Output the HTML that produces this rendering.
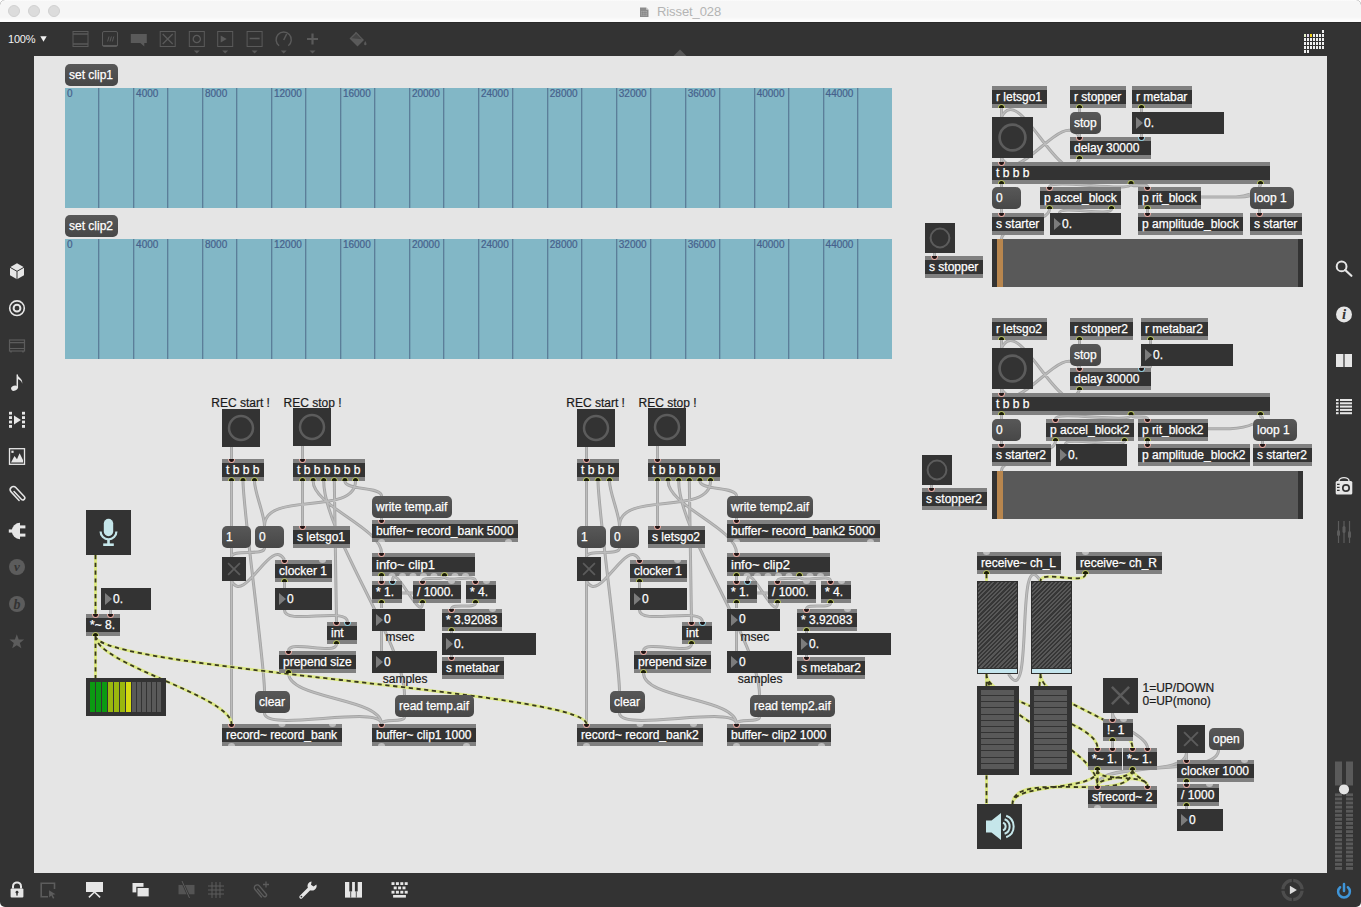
<!DOCTYPE html><html><head><meta charset="utf-8"><title>Risset_028</title><style>

*{box-sizing:border-box}
html,body{margin:0;padding:0}
body{width:1361px;height:907px;overflow:hidden;background:#fff;font-family:"Liberation Sans",sans-serif;font-size:12px;position:relative}
#win{position:absolute;left:0;top:0;width:1361px;height:907px;background:#333;border-radius:5px;overflow:hidden}
#tb{position:absolute;left:0;top:0;width:1361px;height:22px;background:linear-gradient(#fdfdfd 0,#f6f6f6 1.5px,#f6f6f6 17px,#fcfcfc 20px,#fcfcfc 22px);border-bottom:0;box-shadow:0 1px 0 #2a2a2a}
#tb .tl{position:absolute;top:5px;width:12px;height:12px;border-radius:6px;background:#dcdcdc;border:.5px solid #d0d0d0}
#tb .t{position:absolute;left:657px;top:4px;font-size:13px;color:#b4b4b4;line-height:16px;letter-spacing:-.1px}
#cv{position:absolute;left:34px;top:56px;width:1293px;height:816.5px;background:#e5e5e5;overflow:hidden}
#pl{position:absolute;left:-34px;top:-56px;width:1361px;height:907px}
#pl>div{position:absolute}
.o,.m,.n{-webkit-text-stroke:.25px #fff}
.o{height:22px;background:linear-gradient(#808080 0,#808080 4px,#333 4px,#333 18px,#808080 18px);color:#fff;padding:3.6px 0 0 4px;line-height:14px;white-space:nowrap;overflow:hidden}
.o13{height:23px;font-size:13px;line-height:15px;background:linear-gradient(#808080 0,#808080 4px,#333 4px,#333 19px,#808080 19px)}
.m{height:22px;border-radius:5px;background:linear-gradient(#585858,#474747);color:#fff;padding:3.6px 0 0 4px;line-height:14px;white-space:nowrap;overflow:hidden}
.n{height:22px;background:#333;color:#fff;padding:3.6px 0 0 12px;line-height:14px;white-space:nowrap;overflow:hidden}
.n:before{content:"";position:absolute;left:4px;top:5px;border-left:7px solid #7c7c7c;border-top:6px solid transparent;border-bottom:6px solid transparent}
.c{color:#1a1a1a;line-height:13.4px;white-space:nowrap;-webkit-text-stroke:.2px #1a1a1a}
.b{background:#333}
.b svg{display:block}
.wf{background:#82b7c6;overflow:hidden}
.wf i{position:absolute;top:0;width:2px;height:100%;background:linear-gradient(90deg,#5b7e99 0,#5b7e99 1px,rgba(91,126,153,.35) 1px)}
.wf b{position:absolute;top:-0.5px;font-weight:normal;font-size:10px;line-height:12px;color:#46618c;-webkit-text-stroke:.2px #46618c}
.bs{background:#595959;border-left:5px solid #333;border-right:5px solid #333}
.bs i{position:absolute;left:0;top:0;width:6px;height:100%;background:#b8864e}
.g{border:1px solid #2e2e2e;background:repeating-linear-gradient(135deg,#363636 0,#363636 1.5px,#585858 1.5px,#585858 3px)}
.g i{position:absolute;left:0;right:0;bottom:0;height:5px;background:#c5e6ee;border-top:1px solid #333}
.vm{background:#333}
.vm i{position:absolute;left:4px;right:5px;top:4px;height:79px;background:repeating-linear-gradient(#595959 0,#595959 5.15px,#333 5.15px,#333 6.15px)}
#ov{position:absolute;left:0;top:0}


#zm{position:absolute;left:8px;top:31px;color:#f2f2f2;font-size:11px;line-height:16px;letter-spacing:-.2px}
#ic{position:absolute;left:0;top:0}

</style></head><body><div id="win">
<div id="tb"><div class="tl" style="left:8px"></div><div class="tl" style="left:28px"></div><div class="tl" style="left:48px"></div><svg width="12" height="12" style="position:absolute;left:639px;top:6px"><path d="M1 1.5h6.2l2.3 2.3V11H1z" fill="#8c8c8c"/><path d="M7.2 1.5v2.3h2.3" fill="#d0d0d0"/><path d="M2.4 5.2h5.6v4.4H2.4z" fill="#b8b8b8"/><path d="M3.6 5.2v4.4M5.2 5.2v4.4M6.8 5.2v4.4M2.4 6.6h5.6M2.4 8.2h5.6" stroke="#7c7c7c" stroke-width=".6"/></svg><div class="t">Risset_028</div></div><div id="zm">100%</div>
<div id="cv"><div id="pl">
<svg id="cd" width="1361" height="907" style="position:absolute;left:0;top:0"><path d="M231.5 447.0V459.0 M302.5 446.0V459.0 M231.5 481.0V526.0 M231.5 548.0V557.0 M231.5 581.0V724.0 M243.0 481.0C243.0 509.0 264.5 663.0 264.5 691.0 M254.5 481.0C254.5 492.5 264.5 514.5 264.5 526.0 M302.5 481.0V526.0 M313.1 481.0C313.1 505.8 381.5 528.2 381.5 553.0 M323.7 481.0C323.7 533.0 404.5 643.0 404.5 695.0 M334.3 481.0C334.3 509.0 336.5 594.0 336.5 622.0 M344.9 481.0C344.9 490.9 381.5 486.1 381.5 496.0 M355.5 481.0C355.5 517.0 264.5 490.0 264.5 526.0 M381.5 518.0V520.0 M264.5 548.0C264.5 556.6 231.5 548.4 231.5 557.0 M231.5 581.0C244.5 606.0 271.5 535.0 284.5 560.0 M284.5 582.0V588.0 M284.5 610.0C284.5 626.0 347.5 606.0 347.5 622.0 M336.5 644.0C336.5 656.1 288.5 638.9 288.5 651.0 M288.5 673.0C288.5 699.5 381.5 697.5 381.5 724.0 M264.5 713.0C264.5 733.0 381.5 704.0 381.5 724.0 M404.5 717.0C404.5 723.0 381.5 718.0 381.5 724.0 M381.5 576.0V581.0 M381.5 603.0V608.0 M381.5 630.0V651.0 M444.5 576.0C444.5 581.6 422.5 575.4 422.5 581.0 M444.5 576.0C444.5 583.9 475.5 573.1 475.5 581.0 M422.5 603.0C421.5 624.0 393.5 560.0 392.5 581.0 M402 593H413 M475.5 603.0C475.5 609.2 451.5 602.8 451.5 609.0 M451.5 631.0V633.0 M451.5 655.0V657.0 M586.5 447.0V459.0 M657.5 446.0V459.0 M586.5 481.0V526.0 M586.5 548.0V557.0 M586.5 581.0V724.0 M598.0 481.0C598.0 509.0 619.5 663.0 619.5 691.0 M609.5 481.0C609.5 492.5 619.5 514.5 619.5 526.0 M657.5 481.0V526.0 M668.1 481.0C668.1 505.8 736.5 528.2 736.5 553.0 M678.7 481.0C678.7 533.0 759.5 643.0 759.5 695.0 M689.3 481.0C689.3 509.0 691.5 594.0 691.5 622.0 M699.9 481.0C699.9 490.9 736.5 486.1 736.5 496.0 M710.5 481.0C710.5 517.0 619.5 490.0 619.5 526.0 M736.5 518.0V520.0 M619.5 548.0C619.5 556.6 586.5 548.4 586.5 557.0 M586.5 581.0C599.5 606.0 626.5 535.0 639.5 560.0 M639.5 582.0V588.0 M639.5 610.0C639.5 626.0 702.5 606.0 702.5 622.0 M691.5 644.0C691.5 656.1 643.5 638.9 643.5 651.0 M643.5 673.0C643.5 699.5 736.5 697.5 736.5 724.0 M619.5 713.0C619.5 733.0 736.5 704.0 736.5 724.0 M759.5 717.0C759.5 723.0 736.5 718.0 736.5 724.0 M736.5 576.0V581.0 M736.5 603.0V608.0 M736.5 630.0V651.0 M799.5 576.0C799.5 581.6 777.5 575.4 777.5 581.0 M799.5 576.0C799.5 583.9 830.5 573.1 830.5 581.0 M777.5 603.0C776.5 624.0 748.5 560.0 747.5 581.0 M757 593H768 M830.5 603.0C830.5 609.2 806.5 602.8 806.5 609.0 M806.5 631.0V633.0 M806.5 655.0V657.0 M110.5 610.0V614.0 M1001.5 108.0V117.0 M1079.5 159.0C1061.5 196.0 1019.5 80.0 1001.5 117.0 M1001.5 158.0V162.0 M1001.5 158.0C1019.5 188.0 1061.5 107.0 1079.5 137.0 M1079.5 108.0V112.0 M1079.5 134.0V137.0 M1141.5 108.0V112.0 M1141.5 134.0V137.0 M1001.5 184.0V187.0 M1131.0 184.0C1131.0 193.0 1049.5 178.0 1049.5 187.0 M1131.0 184.0C1131.0 188.2 1147.5 182.8 1147.5 187.0 M1260.5 184.0C1260.5 188.0 1259.5 183.0 1259.5 187.0 M1001.5 209.0V213.0 M1049.5 209.0C1049.5 223.2 1001.5 224.8 1001.5 239.0 M1111.5 209.0C1111.5 217.0 1059.5 205.0 1059.5 213.0 M1147.5 209.0V213.0 M1259.5 209.0V213.0 M1201 197H1236Q1244 196.6 1250 194.2 M1236 197Q1244 197.4 1250 195.8 M934.5 253.0V256.0 M1001.5 340.0V348.0 M1079.5 390.0C1061.5 427.0 1019.5 311.0 1001.5 348.0 M1001.5 389.0V393.0 M1001.5 389.0C1019.5 419.0 1061.5 338.0 1079.5 368.0 M1079.5 340.0V344.0 M1079.5 366.0V368.0 M1150.5 340.0V344.0 M1150.5 366.0C1150.5 370.0 1141.5 364.0 1141.5 368.0 M1001.5 415.0V419.0 M1131.0 415.0C1131.0 424.0 1055.5 410.0 1055.5 419.0 M1131.0 415.0C1131.0 419.2 1147.5 414.8 1147.5 419.0 M1260.5 415.0C1260.5 419.0 1262.5 415.0 1262.5 419.0 M1001.5 441.0V444.0 M1055.5 441.0C1055.5 456.4 1001.5 455.6 1001.5 471.0 M1124.5 441.0C1124.5 449.0 1065.5 436.0 1065.5 444.0 M1147.5 441.0V444.0 M1262.5 441.0V444.0 M1208 428.8H1230Q1245 428 1253 424 M931.5 485.0V488.0 M1112.5 713.0V719.0 M1112.5 741.0V748.0 M1112.5 713.0C1112.5 725.4 1147.5 735.6 1147.5 748.0 M1186.5 753.0V760.0 M1186.5 753.0C1186.5 776.7 1097.5 762.3 1097.5 786.0 M1218.5 750.0C1218.5 778.0 1097.5 758.0 1097.5 786.0 M1186.5 782.0V784.0 M1186.5 806.0V809.0 M1008.5 674.0C1034.5 716.0 1014.5 539.0 1040.5 581.0" fill="none" stroke="#a4a4a4" stroke-width="3"/><path d="M231.5 447.0V459.0 M302.5 446.0V459.0 M231.5 481.0V526.0 M231.5 548.0V557.0 M231.5 581.0V724.0 M243.0 481.0C243.0 509.0 264.5 663.0 264.5 691.0 M254.5 481.0C254.5 492.5 264.5 514.5 264.5 526.0 M302.5 481.0V526.0 M313.1 481.0C313.1 505.8 381.5 528.2 381.5 553.0 M323.7 481.0C323.7 533.0 404.5 643.0 404.5 695.0 M334.3 481.0C334.3 509.0 336.5 594.0 336.5 622.0 M344.9 481.0C344.9 490.9 381.5 486.1 381.5 496.0 M355.5 481.0C355.5 517.0 264.5 490.0 264.5 526.0 M381.5 518.0V520.0 M264.5 548.0C264.5 556.6 231.5 548.4 231.5 557.0 M231.5 581.0C244.5 606.0 271.5 535.0 284.5 560.0 M284.5 582.0V588.0 M284.5 610.0C284.5 626.0 347.5 606.0 347.5 622.0 M336.5 644.0C336.5 656.1 288.5 638.9 288.5 651.0 M288.5 673.0C288.5 699.5 381.5 697.5 381.5 724.0 M264.5 713.0C264.5 733.0 381.5 704.0 381.5 724.0 M404.5 717.0C404.5 723.0 381.5 718.0 381.5 724.0 M381.5 576.0V581.0 M381.5 603.0V608.0 M381.5 630.0V651.0 M444.5 576.0C444.5 581.6 422.5 575.4 422.5 581.0 M444.5 576.0C444.5 583.9 475.5 573.1 475.5 581.0 M422.5 603.0C421.5 624.0 393.5 560.0 392.5 581.0 M402 593H413 M475.5 603.0C475.5 609.2 451.5 602.8 451.5 609.0 M451.5 631.0V633.0 M451.5 655.0V657.0 M586.5 447.0V459.0 M657.5 446.0V459.0 M586.5 481.0V526.0 M586.5 548.0V557.0 M586.5 581.0V724.0 M598.0 481.0C598.0 509.0 619.5 663.0 619.5 691.0 M609.5 481.0C609.5 492.5 619.5 514.5 619.5 526.0 M657.5 481.0V526.0 M668.1 481.0C668.1 505.8 736.5 528.2 736.5 553.0 M678.7 481.0C678.7 533.0 759.5 643.0 759.5 695.0 M689.3 481.0C689.3 509.0 691.5 594.0 691.5 622.0 M699.9 481.0C699.9 490.9 736.5 486.1 736.5 496.0 M710.5 481.0C710.5 517.0 619.5 490.0 619.5 526.0 M736.5 518.0V520.0 M619.5 548.0C619.5 556.6 586.5 548.4 586.5 557.0 M586.5 581.0C599.5 606.0 626.5 535.0 639.5 560.0 M639.5 582.0V588.0 M639.5 610.0C639.5 626.0 702.5 606.0 702.5 622.0 M691.5 644.0C691.5 656.1 643.5 638.9 643.5 651.0 M643.5 673.0C643.5 699.5 736.5 697.5 736.5 724.0 M619.5 713.0C619.5 733.0 736.5 704.0 736.5 724.0 M759.5 717.0C759.5 723.0 736.5 718.0 736.5 724.0 M736.5 576.0V581.0 M736.5 603.0V608.0 M736.5 630.0V651.0 M799.5 576.0C799.5 581.6 777.5 575.4 777.5 581.0 M799.5 576.0C799.5 583.9 830.5 573.1 830.5 581.0 M777.5 603.0C776.5 624.0 748.5 560.0 747.5 581.0 M757 593H768 M830.5 603.0C830.5 609.2 806.5 602.8 806.5 609.0 M806.5 631.0V633.0 M806.5 655.0V657.0 M110.5 610.0V614.0 M1001.5 108.0V117.0 M1079.5 159.0C1061.5 196.0 1019.5 80.0 1001.5 117.0 M1001.5 158.0V162.0 M1001.5 158.0C1019.5 188.0 1061.5 107.0 1079.5 137.0 M1079.5 108.0V112.0 M1079.5 134.0V137.0 M1141.5 108.0V112.0 M1141.5 134.0V137.0 M1001.5 184.0V187.0 M1131.0 184.0C1131.0 193.0 1049.5 178.0 1049.5 187.0 M1131.0 184.0C1131.0 188.2 1147.5 182.8 1147.5 187.0 M1260.5 184.0C1260.5 188.0 1259.5 183.0 1259.5 187.0 M1001.5 209.0V213.0 M1049.5 209.0C1049.5 223.2 1001.5 224.8 1001.5 239.0 M1111.5 209.0C1111.5 217.0 1059.5 205.0 1059.5 213.0 M1147.5 209.0V213.0 M1259.5 209.0V213.0 M1201 197H1236Q1244 196.6 1250 194.2 M1236 197Q1244 197.4 1250 195.8 M934.5 253.0V256.0 M1001.5 340.0V348.0 M1079.5 390.0C1061.5 427.0 1019.5 311.0 1001.5 348.0 M1001.5 389.0V393.0 M1001.5 389.0C1019.5 419.0 1061.5 338.0 1079.5 368.0 M1079.5 340.0V344.0 M1079.5 366.0V368.0 M1150.5 340.0V344.0 M1150.5 366.0C1150.5 370.0 1141.5 364.0 1141.5 368.0 M1001.5 415.0V419.0 M1131.0 415.0C1131.0 424.0 1055.5 410.0 1055.5 419.0 M1131.0 415.0C1131.0 419.2 1147.5 414.8 1147.5 419.0 M1260.5 415.0C1260.5 419.0 1262.5 415.0 1262.5 419.0 M1001.5 441.0V444.0 M1055.5 441.0C1055.5 456.4 1001.5 455.6 1001.5 471.0 M1124.5 441.0C1124.5 449.0 1065.5 436.0 1065.5 444.0 M1147.5 441.0V444.0 M1262.5 441.0V444.0 M1208 428.8H1230Q1245 428 1253 424 M931.5 485.0V488.0 M1112.5 713.0V719.0 M1112.5 741.0V748.0 M1112.5 713.0C1112.5 725.4 1147.5 735.6 1147.5 748.0 M1186.5 753.0V760.0 M1186.5 753.0C1186.5 776.7 1097.5 762.3 1097.5 786.0 M1218.5 750.0C1218.5 778.0 1097.5 758.0 1097.5 786.0 M1186.5 782.0V784.0 M1186.5 806.0V809.0 M1008.5 674.0C1034.5 716.0 1014.5 539.0 1040.5 581.0" fill="none" stroke="#bcbcbc" stroke-width="1.3"/><path d="M95.5 555.0V614.0 M95.5 636.0V678.0 M95.5 636.0C95.5 664.0 231.5 696.0 231.5 724.0 M95.5 636.0C95.5 668.0 586.5 692.0 586.5 724.0 M986.5 574.0V581.0 M1085.5 574.0C1085.5 585.4 1040.5 569.6 1040.5 581.0 M986.5 674.0V686.0 M1040.5 674.0C1040.5 678.0 1039.5 682.0 1039.5 686.0 M986.5 674.0C986.5 702.0 1097.5 720.0 1097.5 748.0 M1040.5 674.0C1040.5 702.0 1132.5 720.0 1132.5 748.0 M986.5 674.0V804.0 M986.5 674.0C986.5 714.0 1097.5 746.0 1097.5 786.0 M1097.5 770.0V786.0 M1097.5 770.0C1097.5 783.1 1147.5 772.9 1147.5 786.0 M1132.5 770.0C1132.5 779.6 1097.5 776.4 1097.5 786.0 M1132.5 770.0C1132.5 775.5 1147.5 780.5 1147.5 786.0 M1097.5 770.0C1097.5 792.0 1012.5 782.0 1012.5 804.0 M1132.5 770.0C1132.5 806.0 1012.5 768.0 1012.5 804.0" fill="none" stroke="#dde986" stroke-width="3"/><path d="M95.5 555.0V614.0 M95.5 636.0V678.0 M95.5 636.0C95.5 664.0 231.5 696.0 231.5 724.0 M95.5 636.0C95.5 668.0 586.5 692.0 586.5 724.0 M986.5 574.0V581.0 M1085.5 574.0C1085.5 585.4 1040.5 569.6 1040.5 581.0 M986.5 674.0V686.0 M1040.5 674.0C1040.5 678.0 1039.5 682.0 1039.5 686.0 M986.5 674.0C986.5 702.0 1097.5 720.0 1097.5 748.0 M1040.5 674.0C1040.5 702.0 1132.5 720.0 1132.5 748.0 M986.5 674.0V804.0 M986.5 674.0C986.5 714.0 1097.5 746.0 1097.5 786.0 M1097.5 770.0V786.0 M1097.5 770.0C1097.5 783.1 1147.5 772.9 1147.5 786.0 M1132.5 770.0C1132.5 779.6 1097.5 776.4 1097.5 786.0 M1132.5 770.0C1132.5 775.5 1147.5 780.5 1147.5 786.0 M1097.5 770.0C1097.5 792.0 1012.5 782.0 1012.5 804.0 M1132.5 770.0C1132.5 806.0 1012.5 768.0 1012.5 804.0" fill="none" stroke="#38381e" stroke-width="1.8" stroke-dasharray="4.2 3.6"/></svg>
<div class="m" style="left:65px;top:64px;width:53px">set clip1</div>
<div class="wf" style="left:64.5px;top:88px;width:827.5px;height:120px"><i style="left:33px"></i><i style="left:68px"></i><i style="left:102px"></i><i style="left:137px"></i><i style="left:171px"></i><i style="left:206px"></i><i style="left:240px"></i><i style="left:275px"></i><i style="left:309px"></i><i style="left:344px"></i><i style="left:378px"></i><i style="left:413px"></i><i style="left:447px"></i><i style="left:482px"></i><i style="left:516px"></i><i style="left:551px"></i><i style="left:585px"></i><i style="left:620px"></i><i style="left:654px"></i><i style="left:689px"></i><i style="left:723px"></i><i style="left:758px"></i><i style="left:792px"></i><b style="left:2.6px">0</b><b style="left:71.6px">4000</b><b style="left:140.5px">8000</b><b style="left:209.5px">12000</b><b style="left:278.4px">16000</b><b style="left:347.4px">20000</b><b style="left:416.4px">24000</b><b style="left:485.3px">28000</b><b style="left:554.3px">32000</b><b style="left:623.2px">36000</b><b style="left:692.2px">40000</b><b style="left:761.1px">44000</b></div>
<div class="m" style="left:65px;top:215px;width:53px">set clip2</div>
<div class="wf" style="left:64.5px;top:239px;width:827.5px;height:120px"><i style="left:33px"></i><i style="left:68px"></i><i style="left:102px"></i><i style="left:137px"></i><i style="left:171px"></i><i style="left:206px"></i><i style="left:240px"></i><i style="left:275px"></i><i style="left:309px"></i><i style="left:344px"></i><i style="left:378px"></i><i style="left:413px"></i><i style="left:447px"></i><i style="left:482px"></i><i style="left:516px"></i><i style="left:551px"></i><i style="left:585px"></i><i style="left:620px"></i><i style="left:654px"></i><i style="left:689px"></i><i style="left:723px"></i><i style="left:758px"></i><i style="left:792px"></i><b style="left:2.6px">0</b><b style="left:71.6px">4000</b><b style="left:140.5px">8000</b><b style="left:209.5px">12000</b><b style="left:278.4px">16000</b><b style="left:347.4px">20000</b><b style="left:416.4px">24000</b><b style="left:485.3px">28000</b><b style="left:554.3px">32000</b><b style="left:623.2px">36000</b><b style="left:692.2px">40000</b><b style="left:761.1px">44000</b></div>
<div class="c" style="left:211.25px;top:396.6px">REC start !</div>
<div class="c" style="left:283.5px;top:396.6px">REC stop !</div>
<div class="b" style="left:222px;top:409px;width:38px;height:38px"><svg width="38" height="38"><circle cx="19.0" cy="19.0" r="12.0" fill="none" stroke="#5c5c5c" stroke-width="2.5"/></svg></div>
<div class="b" style="left:293px;top:408px;width:38px;height:38px"><svg width="38" height="38"><circle cx="19.0" cy="19.0" r="12.0" fill="none" stroke="#5c5c5c" stroke-width="2.5"/></svg></div>
<div class="o" style="left:222px;top:459px;width:42px">t b b b</div>
<div class="o" style="left:293px;top:459px;width:72px">t b b b b b b</div>
<div class="m" style="left:222px;top:526px;width:29px">1</div>
<div class="m" style="left:255px;top:526px;width:29px">0</div>
<div class="o" style="left:293px;top:526px;width:57px">s letsgo1</div>
<div class="b" style="left:222px;top:557px;width:24px;height:24px"><svg width="24" height="24"><path d="M6.1 6.1L17.9 17.9M17.9 6.1L6.1 17.9" stroke="#5c5c5c" stroke-width="1.7" fill="none"/></svg></div>
<div class="o" style="left:275px;top:560px;width:57px">clocker 1</div>
<div class="n" style="left:275px;top:588px;width:57px">0</div>
<div class="o" style="left:327px;top:622px;width:30px">int</div>
<div class="o" style="left:279px;top:651px;width:77px">prepend size</div>
<div class="m" style="left:255px;top:691px;width:35px">clear</div>
<div class="o" style="left:222px;top:724px;width:120px">record~ record_bank</div>
<div class="m" style="left:372px;top:496px;width:80px">write temp.aif</div>
<div class="o" style="left:372px;top:520px;width:146px">buffer~ record_bank 5000</div>
<div class="o o13" style="left:372px;top:553px;width:103px">info~ clip1</div>
<div class="o" style="left:372px;top:581px;width:30px">* 1.</div>
<div class="o" style="left:413px;top:581px;width:48px">/ 1000.</div>
<div class="o" style="left:466px;top:581px;width:30px">* 4.</div>
<div class="n" style="left:372px;top:608.5px;width:53px">0</div>
<div class="o" style="left:442px;top:609px;width:60px">* 3.92083</div>
<div class="n" style="left:442px;top:633px;width:94px">0.</div>
<div class="o" style="left:442px;top:657px;width:62px">s metabar</div>
<div class="n" style="left:372px;top:651px;width:65px">0</div>
<div class="c" style="left:385.6px;top:630.6px">msec</div>
<div class="c" style="left:382.75px;top:673.0px">samples</div>
<div class="m" style="left:395px;top:695px;width:79px">read temp.aif</div>
<div class="o" style="left:372px;top:724px;width:104px">buffer~ clip1 1000</div>
<div class="c" style="left:566.25px;top:396.6px">REC start !</div>
<div class="c" style="left:638.5px;top:396.6px">REC stop !</div>
<div class="b" style="left:577px;top:409px;width:38px;height:38px"><svg width="38" height="38"><circle cx="19.0" cy="19.0" r="12.0" fill="none" stroke="#5c5c5c" stroke-width="2.5"/></svg></div>
<div class="b" style="left:648px;top:408px;width:38px;height:38px"><svg width="38" height="38"><circle cx="19.0" cy="19.0" r="12.0" fill="none" stroke="#5c5c5c" stroke-width="2.5"/></svg></div>
<div class="o" style="left:577px;top:459px;width:42px">t b b b</div>
<div class="o" style="left:648px;top:459px;width:72px">t b b b b b b</div>
<div class="m" style="left:577px;top:526px;width:29px">1</div>
<div class="m" style="left:610px;top:526px;width:29px">0</div>
<div class="o" style="left:648px;top:526px;width:57px">s letsgo2</div>
<div class="b" style="left:577px;top:557px;width:24px;height:24px"><svg width="24" height="24"><path d="M6.1 6.1L17.9 17.9M17.9 6.1L6.1 17.9" stroke="#5c5c5c" stroke-width="1.7" fill="none"/></svg></div>
<div class="o" style="left:630px;top:560px;width:57px">clocker 1</div>
<div class="n" style="left:630px;top:588px;width:57px">0</div>
<div class="o" style="left:682px;top:622px;width:30px">int</div>
<div class="o" style="left:634px;top:651px;width:77px">prepend size</div>
<div class="m" style="left:610px;top:691px;width:35px">clear</div>
<div class="o" style="left:577px;top:724px;width:126px">record~ record_bank2</div>
<div class="m" style="left:727px;top:496px;width:86px">write temp2.aif</div>
<div class="o" style="left:727px;top:520px;width:153px">buffer~ record_bank2 5000</div>
<div class="o o13" style="left:727px;top:553px;width:103px">info~ clip2</div>
<div class="o" style="left:727px;top:581px;width:30px">* 1.</div>
<div class="o" style="left:768px;top:581px;width:48px">/ 1000.</div>
<div class="o" style="left:821px;top:581px;width:30px">* 4.</div>
<div class="n" style="left:727px;top:608.5px;width:53px">0</div>
<div class="o" style="left:797px;top:609px;width:60px">* 3.92083</div>
<div class="n" style="left:797px;top:633px;width:94px">0.</div>
<div class="o" style="left:797px;top:657px;width:68px">s metabar2</div>
<div class="n" style="left:727px;top:651px;width:65px">0</div>
<div class="c" style="left:740.6px;top:630.6px">msec</div>
<div class="c" style="left:737.75px;top:673.0px">samples</div>
<div class="m" style="left:750px;top:695px;width:85px">read temp2.aif</div>
<div class="o" style="left:727px;top:724px;width:104px">buffer~ clip2 1000</div>
<div class="b" style="left:86px;top:510px;width:45px;height:45px"><svg width="45" height="45" viewBox="0 0 45 45"><rect x="17.8" y="8.8" width="9.4" height="17.4" rx="4.7" fill="#c5e6ea"/><path d="M14.6 21.5a7.9 7.9 0 0 0 15.8 0" fill="none" stroke="#c5e6ea" stroke-width="2.2"/><path d="M22.5 29v5" stroke="#c5e6ea" stroke-width="2.6"/><rect x="17.2" y="33.4" width="10.6" height="2.6" fill="#c5e6ea"/></svg></div>
<div class="n" style="left:101px;top:588px;width:50px">0.</div>
<div class="o" style="left:86px;top:614px;width:34px">*~ 8.</div>
<div class="b" style="left:86px;top:678px;width:80px;height:38px"><i style="position:absolute;left:4px;top:4px;width:5px;height:30px;background:#0b9a12"></i><i style="position:absolute;left:10px;top:4px;width:5px;height:30px;background:#0b9a12"></i><i style="position:absolute;left:16px;top:4px;width:5px;height:30px;background:#0b9a12"></i><i style="position:absolute;left:22px;top:4px;width:5px;height:30px;background:#9ab70e"></i><i style="position:absolute;left:28px;top:4px;width:5px;height:30px;background:#9ab70e"></i><i style="position:absolute;left:34px;top:4px;width:5px;height:30px;background:#9ab70e"></i><i style="position:absolute;left:40px;top:4px;width:5px;height:30px;background:#d6da10"></i><i style="position:absolute;left:46px;top:4px;width:4px;height:30px;background:#595959"></i><i style="position:absolute;left:51px;top:4px;width:4px;height:30px;background:#595959"></i><i style="position:absolute;left:56px;top:4px;width:4px;height:30px;background:#595959"></i><i style="position:absolute;left:61px;top:4px;width:4px;height:30px;background:#595959"></i><i style="position:absolute;left:66px;top:4px;width:4px;height:30px;background:#595959"></i><i style="position:absolute;left:71px;top:4px;width:4px;height:30px;background:#595959"></i></div>
<div class="o" style="left:992px;top:86px;width:55px">r letsgo1</div>
<div class="o" style="left:1070px;top:86px;width:56px">r stopper</div>
<div class="o" style="left:1132px;top:86px;width:60px">r metabar</div>
<div class="b" style="left:992px;top:117px;width:41px;height:41px"><svg width="41" height="41"><circle cx="20.5" cy="20.5" r="12.9" fill="none" stroke="#5c5c5c" stroke-width="2.7"/></svg></div>
<div class="m" style="left:1070px;top:112px;width:31px">stop</div>
<div class="n" style="left:1132px;top:112px;width:92px">0.</div>
<div class="o" style="left:1070px;top:137px;width:81px">delay 30000</div>
<div class="o" style="left:992px;top:162px;width:278px">t b b b</div>
<div class="m" style="left:992px;top:187px;width:29px">0</div>
<div class="o" style="left:1040px;top:187px;width:81px">p accel_block</div>
<div class="o" style="left:1138px;top:187px;width:63px">p rit_block</div>
<div class="m" style="left:1250px;top:187px;width:44px">loop 1</div>
<div class="o" style="left:992px;top:213px;width:52px">s starter</div>
<div class="n" style="left:1050px;top:213px;width:71px">0.</div>
<div class="o" style="left:1138px;top:213px;width:105px">p amplitude_block</div>
<div class="o" style="left:1250px;top:213px;width:52px">s starter</div>
<div class="bs" style="left:992px;top:239px;width:311px;height:48px"><i></i></div>
<div class="b" style="left:925px;top:223px;width:30px;height:30px"><svg width="30" height="30"><circle cx="15.0" cy="15.0" r="9.4" fill="none" stroke="#5c5c5c" stroke-width="2.0"/></svg></div>
<div class="o" style="left:925px;top:256px;width:58px">s stopper</div>
<div class="o" style="left:992px;top:318px;width:55px">r letsgo2</div>
<div class="o" style="left:1070px;top:318px;width:63px">r stopper2</div>
<div class="o" style="left:1141px;top:318px;width:67px">r metabar2</div>
<div class="b" style="left:992px;top:348px;width:41px;height:41px"><svg width="41" height="41"><circle cx="20.5" cy="20.5" r="12.9" fill="none" stroke="#5c5c5c" stroke-width="2.7"/></svg></div>
<div class="m" style="left:1070px;top:344px;width:31px">stop</div>
<div class="n" style="left:1141px;top:344px;width:92px">0.</div>
<div class="o" style="left:1070px;top:368px;width:81px">delay 30000</div>
<div class="o" style="left:992px;top:393px;width:278px">t b b b</div>
<div class="m" style="left:992px;top:419px;width:29px">0</div>
<div class="o" style="left:1046px;top:419px;width:88px">p accel_block2</div>
<div class="o" style="left:1138px;top:419px;width:70px">p rit_block2</div>
<div class="m" style="left:1253px;top:419px;width:44px">loop 1</div>
<div class="o" style="left:992px;top:444px;width:59px">s starter2</div>
<div class="n" style="left:1056px;top:444px;width:71px">0.</div>
<div class="o" style="left:1138px;top:444px;width:112px">p amplitude_block2</div>
<div class="o" style="left:1253px;top:444px;width:59px">s starter2</div>
<div class="bs" style="left:992px;top:471px;width:311px;height:48px"><i></i></div>
<div class="b" style="left:922px;top:455px;width:30px;height:30px"><svg width="30" height="30"><circle cx="15.0" cy="15.0" r="9.4" fill="none" stroke="#5c5c5c" stroke-width="2.0"/></svg></div>
<div class="o" style="left:922px;top:488px;width:65px">s stopper2</div>
<div class="o" style="left:977px;top:552px;width:84px">receive~ ch_L</div>
<div class="o" style="left:1076px;top:552px;width:86px">receive~ ch_R</div>
<div class="g" style="left:977px;top:581px;width:41px;height:93px"><i></i></div>
<div class="g" style="left:1031px;top:581px;width:41px;height:93px"><i></i></div>
<div class="vm" style="left:977px;top:686px;width:42px;height:89px"><i></i></div>
<div class="vm" style="left:1030px;top:686px;width:42px;height:89px"><i></i></div>
<div class="b" style="left:1103px;top:678px;width:35px;height:35px"><svg width="35" height="35"><path d="M8.9 8.9L26.1 26.1M26.1 8.9L8.9 26.1" stroke="#5c5c5c" stroke-width="2.5" fill="none"/></svg></div>
<div class="c" style="left:1142.5px;top:681.5px">1=UP/DOWN<br>0=UP(mono)</div>
<div class="o" style="left:1103px;top:719px;width:30px">!- 1</div>
<div class="o" style="left:1088px;top:748px;width:34px">*~ 1.</div>
<div class="o" style="left:1123px;top:748px;width:34px">*~ 1.</div>
<div class="b" style="left:1177px;top:725px;width:28px;height:28px"><svg width="28" height="28"><path d="M7.1 7.1L20.9 20.9M20.9 7.1L7.1 20.9" stroke="#5c5c5c" stroke-width="2.0" fill="none"/></svg></div>
<div class="m" style="left:1209px;top:728px;width:35px">open</div>
<div class="o" style="left:1177px;top:760px;width:77px">clocker 1000</div>
<div class="o" style="left:1088px;top:786px;width:69px">sfrecord~ 2</div>
<div class="o" style="left:1177px;top:784px;width:42px">/ 1000</div>
<div class="n" style="left:1177px;top:809px;width:46px">0</div>
<div class="b" style="left:977px;top:804px;width:45px;height:45px"><svg width="45" height="45" viewBox="0 0 45 45"><path d="M9 16.5h5.5l9.5-7.5v27l-9.5-7.5H9z" fill="#c5e6ea"/><path d="M26 18.6a4.2 4.2 0 0 1 0 7.8" fill="none" stroke="#c5e6ea" stroke-width="2"/><path d="M27.6 15.2a7.8 7.8 0 0 1 0 14.6" fill="none" stroke="#c5e6ea" stroke-width="2"/><path d="M29.2 11.8a11.4 11.4 0 0 1 0 21.4" fill="none" stroke="#c5e6ea" stroke-width="2"/></svg></div>
<svg id="ov" width="1361" height="907"><path d="M228.0 459h7a3.5 3.9 0 0 1-7 0z" fill="#eaa9a0"/><path d="M229.0 459h5a2.5 2.9 0 0 1-5 0z" fill="#201414"/><path d="M228.1 481h6.8a3.4 3.7 0 0 0-6.8 0z" fill="#c3cf5a"/><path d="M228.9 481h5.2a2.6 2.9 0 0 0-5.2 0z" fill="#1a1c08"/><path d="M239.6 481h6.8a3.4 3.7 0 0 0-6.8 0z" fill="#c3cf5a"/><path d="M240.4 481h5.2a2.6 2.9 0 0 0-5.2 0z" fill="#1a1c08"/><path d="M251.1 481h6.8a3.4 3.7 0 0 0-6.8 0z" fill="#c3cf5a"/><path d="M251.9 481h5.2a2.6 2.9 0 0 0-5.2 0z" fill="#1a1c08"/><path d="M299.0 459h7a3.5 3.9 0 0 1-7 0z" fill="#eaa9a0"/><path d="M300.0 459h5a2.5 2.9 0 0 1-5 0z" fill="#201414"/><path d="M299.1 481h6.8a3.4 3.7 0 0 0-6.8 0z" fill="#c3cf5a"/><path d="M299.9 481h5.2a2.6 2.9 0 0 0-5.2 0z" fill="#1a1c08"/><path d="M309.7 481h6.8a3.4 3.7 0 0 0-6.8 0z" fill="#c3cf5a"/><path d="M310.5 481h5.2a2.6 2.9 0 0 0-5.2 0z" fill="#1a1c08"/><path d="M320.3 481h6.8a3.4 3.7 0 0 0-6.8 0z" fill="#c3cf5a"/><path d="M321.1 481h5.2a2.6 2.9 0 0 0-5.2 0z" fill="#1a1c08"/><path d="M330.9 481h6.8a3.4 3.7 0 0 0-6.8 0z" fill="#c3cf5a"/><path d="M331.7 481h5.2a2.6 2.9 0 0 0-5.2 0z" fill="#1a1c08"/><path d="M341.5 481h6.8a3.4 3.7 0 0 0-6.8 0z" fill="#c3cf5a"/><path d="M342.3 481h5.2a2.6 2.9 0 0 0-5.2 0z" fill="#1a1c08"/><path d="M352.1 481h6.8a3.4 3.7 0 0 0-6.8 0z" fill="#c3cf5a"/><path d="M352.9 481h5.2a2.6 2.9 0 0 0-5.2 0z" fill="#1a1c08"/><path d="M299.0 526h7a3.5 3.9 0 0 1-7 0z" fill="#eaa9a0"/><path d="M300.0 526h5a2.5 2.9 0 0 1-5 0z" fill="#201414"/><path d="M281.0 560h7a3.5 3.9 0 0 1-7 0z" fill="#eaa9a0"/><path d="M282.0 560h5a2.5 2.9 0 0 1-5 0z" fill="#201414"/><path d="M319.0 560h7a3.5 3 0 0 1-7 0z" fill="#bdbdbd"/><path d="M281.1 582h6.8a3.4 3.7 0 0 0-6.8 0z" fill="#c3cf5a"/><path d="M281.9 582h5.2a2.6 2.9 0 0 0-5.2 0z" fill="#1a1c08"/><path d="M333.0 622h7a3.5 3.9 0 0 1-7 0z" fill="#eaa9a0"/><path d="M334.0 622h5a2.5 2.9 0 0 1-5 0z" fill="#201414"/><path d="M344.0 622h7a3.5 3.9 0 0 1-7 0z" fill="#8fcfe0"/><path d="M345.0 622h5a2.5 2.9 0 0 1-5 0z" fill="#201414"/><path d="M333.1 644h6.8a3.4 3.7 0 0 0-6.8 0z" fill="#c3cf5a"/><path d="M333.9 644h5.2a2.6 2.9 0 0 0-5.2 0z" fill="#1a1c08"/><path d="M285.0 651h7a3.5 3.9 0 0 1-7 0z" fill="#eaa9a0"/><path d="M286.0 651h5a2.5 2.9 0 0 1-5 0z" fill="#201414"/><path d="M285.1 673h6.8a3.4 3.7 0 0 0-6.8 0z" fill="#c3cf5a"/><path d="M285.9 673h5.2a2.6 2.9 0 0 0-5.2 0z" fill="#1a1c08"/><path d="M228.0 724h7a3.5 3.9 0 0 1-7 0z" fill="#eaa9a0"/><path d="M229.0 724h5a2.5 2.9 0 0 1-5 0z" fill="#201414"/><path d="M278.5 724h7a3.5 3 0 0 1-7 0z" fill="#bdbdbd"/><path d="M329.0 724h7a3.5 3 0 0 1-7 0z" fill="#bdbdbd"/><path d="M228.0 746h7a3.5 3 0 0 0-7 0z" fill="#bdbdbd"/><path d="M378.0 520h7a3.5 3.9 0 0 1-7 0z" fill="#eaa9a0"/><path d="M379.0 520h5a2.5 2.9 0 0 1-5 0z" fill="#201414"/><path d="M378.0 542h7a3.5 3 0 0 0-7 0z" fill="#bdbdbd"/><path d="M505.0 542h7a3.5 3 0 0 0-7 0z" fill="#bdbdbd"/><path d="M378.0 553h7a3.5 3.9 0 0 1-7 0z" fill="#eaa9a0"/><path d="M379.0 553h5a2.5 2.9 0 0 1-5 0z" fill="#201414"/><path d="M378.1 576h6.8a3.4 3.7 0 0 0-6.8 0z" fill="#c3cf5a"/><path d="M378.9 576h5.2a2.6 2.9 0 0 0-5.2 0z" fill="#1a1c08"/><path d="M388.5 576h7a3.5 3 0 0 0-7 0z" fill="#bdbdbd"/><path d="M399.0 576h7a3.5 3 0 0 0-7 0z" fill="#bdbdbd"/><path d="M409.5 576h7a3.5 3 0 0 0-7 0z" fill="#bdbdbd"/><path d="M420.0 576h7a3.5 3 0 0 0-7 0z" fill="#bdbdbd"/><path d="M430.5 576h7a3.5 3 0 0 0-7 0z" fill="#bdbdbd"/><path d="M441.1 576h6.8a3.4 3.7 0 0 0-6.8 0z" fill="#c3cf5a"/><path d="M441.9 576h5.2a2.6 2.9 0 0 0-5.2 0z" fill="#1a1c08"/><path d="M451.5 576h7a3.5 3 0 0 0-7 0z" fill="#bdbdbd"/><path d="M462.0 576h7a3.5 3 0 0 0-7 0z" fill="#bdbdbd"/><path d="M378.0 581h7a3.5 3.9 0 0 1-7 0z" fill="#eaa9a0"/><path d="M379.0 581h5a2.5 2.9 0 0 1-5 0z" fill="#201414"/><path d="M389.0 581h7a3.5 3.9 0 0 1-7 0z" fill="#8fcfe0"/><path d="M390.0 581h5a2.5 2.9 0 0 1-5 0z" fill="#201414"/><path d="M378.1 603h6.8a3.4 3.7 0 0 0-6.8 0z" fill="#c3cf5a"/><path d="M378.9 603h5.2a2.6 2.9 0 0 0-5.2 0z" fill="#1a1c08"/><path d="M419.0 581h7a3.5 3.9 0 0 1-7 0z" fill="#eaa9a0"/><path d="M420.0 581h5a2.5 2.9 0 0 1-5 0z" fill="#201414"/><path d="M448.0 581h7a3.5 3 0 0 1-7 0z" fill="#bdbdbd"/><path d="M419.1 603h6.8a3.4 3.7 0 0 0-6.8 0z" fill="#c3cf5a"/><path d="M419.9 603h5.2a2.6 2.9 0 0 0-5.2 0z" fill="#1a1c08"/><path d="M472.0 581h7a3.5 3.9 0 0 1-7 0z" fill="#eaa9a0"/><path d="M473.0 581h5a2.5 2.9 0 0 1-5 0z" fill="#201414"/><path d="M483.0 581h7a3.5 3 0 0 1-7 0z" fill="#bdbdbd"/><path d="M472.1 603h6.8a3.4 3.7 0 0 0-6.8 0z" fill="#c3cf5a"/><path d="M472.9 603h5.2a2.6 2.9 0 0 0-5.2 0z" fill="#1a1c08"/><path d="M448.0 609h7a3.5 3.9 0 0 1-7 0z" fill="#eaa9a0"/><path d="M449.0 609h5a2.5 2.9 0 0 1-5 0z" fill="#201414"/><path d="M489.0 609h7a3.5 3 0 0 1-7 0z" fill="#bdbdbd"/><path d="M448.1 631h6.8a3.4 3.7 0 0 0-6.8 0z" fill="#c3cf5a"/><path d="M448.9 631h5.2a2.6 2.9 0 0 0-5.2 0z" fill="#1a1c08"/><path d="M448.0 657h7a3.5 3.9 0 0 1-7 0z" fill="#eaa9a0"/><path d="M449.0 657h5a2.5 2.9 0 0 1-5 0z" fill="#201414"/><path d="M378.0 724h7a3.5 3.9 0 0 1-7 0z" fill="#eaa9a0"/><path d="M379.0 724h5a2.5 2.9 0 0 1-5 0z" fill="#201414"/><path d="M378.0 746h7a3.5 3 0 0 0-7 0z" fill="#bdbdbd"/><path d="M463.0 746h7a3.5 3 0 0 0-7 0z" fill="#bdbdbd"/><path d="M583.0 459h7a3.5 3.9 0 0 1-7 0z" fill="#eaa9a0"/><path d="M584.0 459h5a2.5 2.9 0 0 1-5 0z" fill="#201414"/><path d="M583.1 481h6.8a3.4 3.7 0 0 0-6.8 0z" fill="#c3cf5a"/><path d="M583.9 481h5.2a2.6 2.9 0 0 0-5.2 0z" fill="#1a1c08"/><path d="M594.6 481h6.8a3.4 3.7 0 0 0-6.8 0z" fill="#c3cf5a"/><path d="M595.4 481h5.2a2.6 2.9 0 0 0-5.2 0z" fill="#1a1c08"/><path d="M606.1 481h6.8a3.4 3.7 0 0 0-6.8 0z" fill="#c3cf5a"/><path d="M606.9 481h5.2a2.6 2.9 0 0 0-5.2 0z" fill="#1a1c08"/><path d="M654.0 459h7a3.5 3.9 0 0 1-7 0z" fill="#eaa9a0"/><path d="M655.0 459h5a2.5 2.9 0 0 1-5 0z" fill="#201414"/><path d="M654.1 481h6.8a3.4 3.7 0 0 0-6.8 0z" fill="#c3cf5a"/><path d="M654.9 481h5.2a2.6 2.9 0 0 0-5.2 0z" fill="#1a1c08"/><path d="M664.7 481h6.8a3.4 3.7 0 0 0-6.8 0z" fill="#c3cf5a"/><path d="M665.5 481h5.2a2.6 2.9 0 0 0-5.2 0z" fill="#1a1c08"/><path d="M675.3 481h6.8a3.4 3.7 0 0 0-6.8 0z" fill="#c3cf5a"/><path d="M676.1 481h5.2a2.6 2.9 0 0 0-5.2 0z" fill="#1a1c08"/><path d="M685.9 481h6.8a3.4 3.7 0 0 0-6.8 0z" fill="#c3cf5a"/><path d="M686.7 481h5.2a2.6 2.9 0 0 0-5.2 0z" fill="#1a1c08"/><path d="M696.5 481h6.8a3.4 3.7 0 0 0-6.8 0z" fill="#c3cf5a"/><path d="M697.3 481h5.2a2.6 2.9 0 0 0-5.2 0z" fill="#1a1c08"/><path d="M707.1 481h6.8a3.4 3.7 0 0 0-6.8 0z" fill="#c3cf5a"/><path d="M707.9 481h5.2a2.6 2.9 0 0 0-5.2 0z" fill="#1a1c08"/><path d="M654.0 526h7a3.5 3.9 0 0 1-7 0z" fill="#eaa9a0"/><path d="M655.0 526h5a2.5 2.9 0 0 1-5 0z" fill="#201414"/><path d="M636.0 560h7a3.5 3.9 0 0 1-7 0z" fill="#eaa9a0"/><path d="M637.0 560h5a2.5 2.9 0 0 1-5 0z" fill="#201414"/><path d="M674.0 560h7a3.5 3 0 0 1-7 0z" fill="#bdbdbd"/><path d="M636.1 582h6.8a3.4 3.7 0 0 0-6.8 0z" fill="#c3cf5a"/><path d="M636.9 582h5.2a2.6 2.9 0 0 0-5.2 0z" fill="#1a1c08"/><path d="M688.0 622h7a3.5 3.9 0 0 1-7 0z" fill="#eaa9a0"/><path d="M689.0 622h5a2.5 2.9 0 0 1-5 0z" fill="#201414"/><path d="M699.0 622h7a3.5 3.9 0 0 1-7 0z" fill="#8fcfe0"/><path d="M700.0 622h5a2.5 2.9 0 0 1-5 0z" fill="#201414"/><path d="M688.1 644h6.8a3.4 3.7 0 0 0-6.8 0z" fill="#c3cf5a"/><path d="M688.9 644h5.2a2.6 2.9 0 0 0-5.2 0z" fill="#1a1c08"/><path d="M640.0 651h7a3.5 3.9 0 0 1-7 0z" fill="#eaa9a0"/><path d="M641.0 651h5a2.5 2.9 0 0 1-5 0z" fill="#201414"/><path d="M640.1 673h6.8a3.4 3.7 0 0 0-6.8 0z" fill="#c3cf5a"/><path d="M640.9 673h5.2a2.6 2.9 0 0 0-5.2 0z" fill="#1a1c08"/><path d="M583.0 724h7a3.5 3.9 0 0 1-7 0z" fill="#eaa9a0"/><path d="M584.0 724h5a2.5 2.9 0 0 1-5 0z" fill="#201414"/><path d="M636.5 724h7a3.5 3 0 0 1-7 0z" fill="#bdbdbd"/><path d="M690.0 724h7a3.5 3 0 0 1-7 0z" fill="#bdbdbd"/><path d="M583.0 746h7a3.5 3 0 0 0-7 0z" fill="#bdbdbd"/><path d="M733.0 520h7a3.5 3.9 0 0 1-7 0z" fill="#eaa9a0"/><path d="M734.0 520h5a2.5 2.9 0 0 1-5 0z" fill="#201414"/><path d="M733.0 542h7a3.5 3 0 0 0-7 0z" fill="#bdbdbd"/><path d="M867.0 542h7a3.5 3 0 0 0-7 0z" fill="#bdbdbd"/><path d="M733.0 553h7a3.5 3.9 0 0 1-7 0z" fill="#eaa9a0"/><path d="M734.0 553h5a2.5 2.9 0 0 1-5 0z" fill="#201414"/><path d="M733.1 576h6.8a3.4 3.7 0 0 0-6.8 0z" fill="#c3cf5a"/><path d="M733.9 576h5.2a2.6 2.9 0 0 0-5.2 0z" fill="#1a1c08"/><path d="M743.5 576h7a3.5 3 0 0 0-7 0z" fill="#bdbdbd"/><path d="M754.0 576h7a3.5 3 0 0 0-7 0z" fill="#bdbdbd"/><path d="M764.5 576h7a3.5 3 0 0 0-7 0z" fill="#bdbdbd"/><path d="M775.0 576h7a3.5 3 0 0 0-7 0z" fill="#bdbdbd"/><path d="M785.5 576h7a3.5 3 0 0 0-7 0z" fill="#bdbdbd"/><path d="M796.1 576h6.8a3.4 3.7 0 0 0-6.8 0z" fill="#c3cf5a"/><path d="M796.9 576h5.2a2.6 2.9 0 0 0-5.2 0z" fill="#1a1c08"/><path d="M806.5 576h7a3.5 3 0 0 0-7 0z" fill="#bdbdbd"/><path d="M817.0 576h7a3.5 3 0 0 0-7 0z" fill="#bdbdbd"/><path d="M733.0 581h7a3.5 3.9 0 0 1-7 0z" fill="#eaa9a0"/><path d="M734.0 581h5a2.5 2.9 0 0 1-5 0z" fill="#201414"/><path d="M744.0 581h7a3.5 3.9 0 0 1-7 0z" fill="#8fcfe0"/><path d="M745.0 581h5a2.5 2.9 0 0 1-5 0z" fill="#201414"/><path d="M733.1 603h6.8a3.4 3.7 0 0 0-6.8 0z" fill="#c3cf5a"/><path d="M733.9 603h5.2a2.6 2.9 0 0 0-5.2 0z" fill="#1a1c08"/><path d="M774.0 581h7a3.5 3.9 0 0 1-7 0z" fill="#eaa9a0"/><path d="M775.0 581h5a2.5 2.9 0 0 1-5 0z" fill="#201414"/><path d="M803.0 581h7a3.5 3 0 0 1-7 0z" fill="#bdbdbd"/><path d="M774.1 603h6.8a3.4 3.7 0 0 0-6.8 0z" fill="#c3cf5a"/><path d="M774.9 603h5.2a2.6 2.9 0 0 0-5.2 0z" fill="#1a1c08"/><path d="M827.0 581h7a3.5 3.9 0 0 1-7 0z" fill="#eaa9a0"/><path d="M828.0 581h5a2.5 2.9 0 0 1-5 0z" fill="#201414"/><path d="M838.0 581h7a3.5 3 0 0 1-7 0z" fill="#bdbdbd"/><path d="M827.1 603h6.8a3.4 3.7 0 0 0-6.8 0z" fill="#c3cf5a"/><path d="M827.9 603h5.2a2.6 2.9 0 0 0-5.2 0z" fill="#1a1c08"/><path d="M803.0 609h7a3.5 3.9 0 0 1-7 0z" fill="#eaa9a0"/><path d="M804.0 609h5a2.5 2.9 0 0 1-5 0z" fill="#201414"/><path d="M844.0 609h7a3.5 3 0 0 1-7 0z" fill="#bdbdbd"/><path d="M803.1 631h6.8a3.4 3.7 0 0 0-6.8 0z" fill="#c3cf5a"/><path d="M803.9 631h5.2a2.6 2.9 0 0 0-5.2 0z" fill="#1a1c08"/><path d="M803.0 657h7a3.5 3.9 0 0 1-7 0z" fill="#eaa9a0"/><path d="M804.0 657h5a2.5 2.9 0 0 1-5 0z" fill="#201414"/><path d="M733.0 724h7a3.5 3.9 0 0 1-7 0z" fill="#eaa9a0"/><path d="M734.0 724h5a2.5 2.9 0 0 1-5 0z" fill="#201414"/><path d="M733.0 746h7a3.5 3 0 0 0-7 0z" fill="#bdbdbd"/><path d="M818.0 746h7a3.5 3 0 0 0-7 0z" fill="#bdbdbd"/><path d="M92.0 614h7a3.5 3.9 0 0 1-7 0z" fill="#eaa9a0"/><path d="M93.0 614h5a2.5 2.9 0 0 1-5 0z" fill="#201414"/><path d="M107.0 614h7a3.5 3.9 0 0 1-7 0z" fill="#eaa9a0"/><path d="M108.0 614h5a2.5 2.9 0 0 1-5 0z" fill="#201414"/><path d="M92.1 636h6.8a3.4 3.7 0 0 0-6.8 0z" fill="#c3cf5a"/><path d="M92.9 636h5.2a2.6 2.9 0 0 0-5.2 0z" fill="#1a1c08"/><path d="M998.1 108h6.8a3.4 3.7 0 0 0-6.8 0z" fill="#c3cf5a"/><path d="M998.9 108h5.2a2.6 2.9 0 0 0-5.2 0z" fill="#1a1c08"/><path d="M1076.1 108h6.8a3.4 3.7 0 0 0-6.8 0z" fill="#c3cf5a"/><path d="M1076.9 108h5.2a2.6 2.9 0 0 0-5.2 0z" fill="#1a1c08"/><path d="M1138.1 108h6.8a3.4 3.7 0 0 0-6.8 0z" fill="#c3cf5a"/><path d="M1138.9 108h5.2a2.6 2.9 0 0 0-5.2 0z" fill="#1a1c08"/><path d="M1076.0 137h7a3.5 3.9 0 0 1-7 0z" fill="#eaa9a0"/><path d="M1077.0 137h5a2.5 2.9 0 0 1-5 0z" fill="#201414"/><path d="M1138.0 137h7a3.5 3.9 0 0 1-7 0z" fill="#8fcfe0"/><path d="M1139.0 137h5a2.5 2.9 0 0 1-5 0z" fill="#201414"/><path d="M1076.1 159h6.8a3.4 3.7 0 0 0-6.8 0z" fill="#c3cf5a"/><path d="M1076.9 159h5.2a2.6 2.9 0 0 0-5.2 0z" fill="#1a1c08"/><path d="M998.0 162h7a3.5 3.9 0 0 1-7 0z" fill="#eaa9a0"/><path d="M999.0 162h5a2.5 2.9 0 0 1-5 0z" fill="#201414"/><path d="M998.1 184h6.8a3.4 3.7 0 0 0-6.8 0z" fill="#c3cf5a"/><path d="M998.9 184h5.2a2.6 2.9 0 0 0-5.2 0z" fill="#1a1c08"/><path d="M1127.6 184h6.8a3.4 3.7 0 0 0-6.8 0z" fill="#c3cf5a"/><path d="M1128.4 184h5.2a2.6 2.9 0 0 0-5.2 0z" fill="#1a1c08"/><path d="M1257.1 184h6.8a3.4 3.7 0 0 0-6.8 0z" fill="#c3cf5a"/><path d="M1257.9 184h5.2a2.6 2.9 0 0 0-5.2 0z" fill="#1a1c08"/><path d="M1046.0 187h7a3.5 3.9 0 0 1-7 0z" fill="#eaa9a0"/><path d="M1047.0 187h5a2.5 2.9 0 0 1-5 0z" fill="#201414"/><path d="M1046.1 209h6.8a3.4 3.7 0 0 0-6.8 0z" fill="#c3cf5a"/><path d="M1046.9 209h5.2a2.6 2.9 0 0 0-5.2 0z" fill="#1a1c08"/><path d="M1108.1 209h6.8a3.4 3.7 0 0 0-6.8 0z" fill="#c3cf5a"/><path d="M1108.9 209h5.2a2.6 2.9 0 0 0-5.2 0z" fill="#1a1c08"/><path d="M1144.0 187h7a3.5 3.9 0 0 1-7 0z" fill="#eaa9a0"/><path d="M1145.0 187h5a2.5 2.9 0 0 1-5 0z" fill="#201414"/><path d="M1144.1 209h6.8a3.4 3.7 0 0 0-6.8 0z" fill="#c3cf5a"/><path d="M1144.9 209h5.2a2.6 2.9 0 0 0-5.2 0z" fill="#1a1c08"/><path d="M998.0 213h7a3.5 3.9 0 0 1-7 0z" fill="#eaa9a0"/><path d="M999.0 213h5a2.5 2.9 0 0 1-5 0z" fill="#201414"/><path d="M1144.0 213h7a3.5 3.9 0 0 1-7 0z" fill="#eaa9a0"/><path d="M1145.0 213h5a2.5 2.9 0 0 1-5 0z" fill="#201414"/><path d="M1256.0 213h7a3.5 3.9 0 0 1-7 0z" fill="#eaa9a0"/><path d="M1257.0 213h5a2.5 2.9 0 0 1-5 0z" fill="#201414"/><path d="M931.0 256h7a3.5 3.9 0 0 1-7 0z" fill="#eaa9a0"/><path d="M932.0 256h5a2.5 2.9 0 0 1-5 0z" fill="#201414"/><path d="M998.1 340h6.8a3.4 3.7 0 0 0-6.8 0z" fill="#c3cf5a"/><path d="M998.9 340h5.2a2.6 2.9 0 0 0-5.2 0z" fill="#1a1c08"/><path d="M1076.1 340h6.8a3.4 3.7 0 0 0-6.8 0z" fill="#c3cf5a"/><path d="M1076.9 340h5.2a2.6 2.9 0 0 0-5.2 0z" fill="#1a1c08"/><path d="M1147.1 340h6.8a3.4 3.7 0 0 0-6.8 0z" fill="#c3cf5a"/><path d="M1147.9 340h5.2a2.6 2.9 0 0 0-5.2 0z" fill="#1a1c08"/><path d="M1076.0 368h7a3.5 3.9 0 0 1-7 0z" fill="#eaa9a0"/><path d="M1077.0 368h5a2.5 2.9 0 0 1-5 0z" fill="#201414"/><path d="M1138.0 368h7a3.5 3.9 0 0 1-7 0z" fill="#8fcfe0"/><path d="M1139.0 368h5a2.5 2.9 0 0 1-5 0z" fill="#201414"/><path d="M1076.1 390h6.8a3.4 3.7 0 0 0-6.8 0z" fill="#c3cf5a"/><path d="M1076.9 390h5.2a2.6 2.9 0 0 0-5.2 0z" fill="#1a1c08"/><path d="M998.0 393h7a3.5 3.9 0 0 1-7 0z" fill="#eaa9a0"/><path d="M999.0 393h5a2.5 2.9 0 0 1-5 0z" fill="#201414"/><path d="M998.1 415h6.8a3.4 3.7 0 0 0-6.8 0z" fill="#c3cf5a"/><path d="M998.9 415h5.2a2.6 2.9 0 0 0-5.2 0z" fill="#1a1c08"/><path d="M1127.6 415h6.8a3.4 3.7 0 0 0-6.8 0z" fill="#c3cf5a"/><path d="M1128.4 415h5.2a2.6 2.9 0 0 0-5.2 0z" fill="#1a1c08"/><path d="M1257.1 415h6.8a3.4 3.7 0 0 0-6.8 0z" fill="#c3cf5a"/><path d="M1257.9 415h5.2a2.6 2.9 0 0 0-5.2 0z" fill="#1a1c08"/><path d="M1052.0 419h7a3.5 3.9 0 0 1-7 0z" fill="#eaa9a0"/><path d="M1053.0 419h5a2.5 2.9 0 0 1-5 0z" fill="#201414"/><path d="M1052.1 441h6.8a3.4 3.7 0 0 0-6.8 0z" fill="#c3cf5a"/><path d="M1052.9 441h5.2a2.6 2.9 0 0 0-5.2 0z" fill="#1a1c08"/><path d="M1121.1 441h6.8a3.4 3.7 0 0 0-6.8 0z" fill="#c3cf5a"/><path d="M1121.9 441h5.2a2.6 2.9 0 0 0-5.2 0z" fill="#1a1c08"/><path d="M1144.0 419h7a3.5 3.9 0 0 1-7 0z" fill="#eaa9a0"/><path d="M1145.0 419h5a2.5 2.9 0 0 1-5 0z" fill="#201414"/><path d="M1144.1 441h6.8a3.4 3.7 0 0 0-6.8 0z" fill="#c3cf5a"/><path d="M1144.9 441h5.2a2.6 2.9 0 0 0-5.2 0z" fill="#1a1c08"/><path d="M998.0 444h7a3.5 3.9 0 0 1-7 0z" fill="#eaa9a0"/><path d="M999.0 444h5a2.5 2.9 0 0 1-5 0z" fill="#201414"/><path d="M1144.0 444h7a3.5 3.9 0 0 1-7 0z" fill="#eaa9a0"/><path d="M1145.0 444h5a2.5 2.9 0 0 1-5 0z" fill="#201414"/><path d="M1259.0 444h7a3.5 3.9 0 0 1-7 0z" fill="#eaa9a0"/><path d="M1260.0 444h5a2.5 2.9 0 0 1-5 0z" fill="#201414"/><path d="M928.0 488h7a3.5 3.9 0 0 1-7 0z" fill="#eaa9a0"/><path d="M929.0 488h5a2.5 2.9 0 0 1-5 0z" fill="#201414"/><path d="M983.0 552h7a3.5 3 0 0 1-7 0z" fill="#bdbdbd"/><path d="M983.1 574h6.8a3.4 3.7 0 0 0-6.8 0z" fill="#c3cf5a"/><path d="M983.9 574h5.2a2.6 2.9 0 0 0-5.2 0z" fill="#1a1c08"/><path d="M1082.0 552h7a3.5 3 0 0 1-7 0z" fill="#bdbdbd"/><path d="M1082.1 574h6.8a3.4 3.7 0 0 0-6.8 0z" fill="#c3cf5a"/><path d="M1082.9 574h5.2a2.6 2.9 0 0 0-5.2 0z" fill="#1a1c08"/><path d="M1109.0 719h7a3.5 3.9 0 0 1-7 0z" fill="#eaa9a0"/><path d="M1110.0 719h5a2.5 2.9 0 0 1-5 0z" fill="#201414"/><path d="M1120.0 719h7a3.5 3 0 0 1-7 0z" fill="#bdbdbd"/><path d="M1109.1 741h6.8a3.4 3.7 0 0 0-6.8 0z" fill="#c3cf5a"/><path d="M1109.9 741h5.2a2.6 2.9 0 0 0-5.2 0z" fill="#1a1c08"/><path d="M1094.0 748h7a3.5 3.9 0 0 1-7 0z" fill="#eaa9a0"/><path d="M1095.0 748h5a2.5 2.9 0 0 1-5 0z" fill="#201414"/><path d="M1109.0 748h7a3.5 3.9 0 0 1-7 0z" fill="#eaa9a0"/><path d="M1110.0 748h5a2.5 2.9 0 0 1-5 0z" fill="#201414"/><path d="M1094.1 770h6.8a3.4 3.7 0 0 0-6.8 0z" fill="#c3cf5a"/><path d="M1094.9 770h5.2a2.6 2.9 0 0 0-5.2 0z" fill="#1a1c08"/><path d="M1129.0 748h7a3.5 3.9 0 0 1-7 0z" fill="#eaa9a0"/><path d="M1130.0 748h5a2.5 2.9 0 0 1-5 0z" fill="#201414"/><path d="M1144.0 748h7a3.5 3.9 0 0 1-7 0z" fill="#eaa9a0"/><path d="M1145.0 748h5a2.5 2.9 0 0 1-5 0z" fill="#201414"/><path d="M1129.1 770h6.8a3.4 3.7 0 0 0-6.8 0z" fill="#c3cf5a"/><path d="M1129.9 770h5.2a2.6 2.9 0 0 0-5.2 0z" fill="#1a1c08"/><path d="M1183.0 760h7a3.5 3.9 0 0 1-7 0z" fill="#eaa9a0"/><path d="M1184.0 760h5a2.5 2.9 0 0 1-5 0z" fill="#201414"/><path d="M1241.0 760h7a3.5 3 0 0 1-7 0z" fill="#bdbdbd"/><path d="M1183.1 782h6.8a3.4 3.7 0 0 0-6.8 0z" fill="#c3cf5a"/><path d="M1183.9 782h5.2a2.6 2.9 0 0 0-5.2 0z" fill="#1a1c08"/><path d="M1094.0 786h7a3.5 3.9 0 0 1-7 0z" fill="#eaa9a0"/><path d="M1095.0 786h5a2.5 2.9 0 0 1-5 0z" fill="#201414"/><path d="M1144.0 786h7a3.5 3.9 0 0 1-7 0z" fill="#eaa9a0"/><path d="M1145.0 786h5a2.5 2.9 0 0 1-5 0z" fill="#201414"/><path d="M1094.0 808h7a3.5 3 0 0 0-7 0z" fill="#bdbdbd"/><path d="M1183.0 784h7a3.5 3.9 0 0 1-7 0z" fill="#eaa9a0"/><path d="M1184.0 784h5a2.5 2.9 0 0 1-5 0z" fill="#201414"/><path d="M1206.0 784h7a3.5 3 0 0 1-7 0z" fill="#bdbdbd"/><path d="M1183.1 806h6.8a3.4 3.7 0 0 0-6.8 0z" fill="#c3cf5a"/><path d="M1183.9 806h5.2a2.6 2.9 0 0 0-5.2 0z" fill="#1a1c08"/></svg>
</div></div>
<svg id="ic" width="1361" height="907"><g transform="translate(17 271.3)"><path d="M0-8L7-4V4L0 8L-7 4V-4Z" fill="#e6e6e6"/><path d="M-7-4L0 0L7-4M0 0V8" stroke="#333" stroke-width="1" fill="none"/></g><g transform="translate(17 308.2)"><circle r="7.3" fill="none" stroke="#e6e6e6" stroke-width="1.6"/><circle r="3.4" fill="none" stroke="#e6e6e6" stroke-width="2"/></g><g transform="translate(17 345.5)"><rect x="-7.5" y="-5.5" width="15" height="11" fill="none" stroke="#5c5c5c" stroke-width="1.2"/><path d="M-7.5-2.8h15M-7.5 3h15" stroke="#5c5c5c" stroke-width="1.2"/><path d="M-6 5.5v1.5M6 5.5v1.5" stroke="#5c5c5c" stroke-width="1.4"/></g><g transform="translate(17 383)"><ellipse cx="-2.6" cy="5.2" rx="3.4" ry="2.5" transform="rotate(-20 -2.6 5.2)" fill="#e6e6e6"/><path d="M0.3 5.2V-8.5" stroke="#e6e6e6" stroke-width="1.5"/><path d="M0.3-8.5C1.5-5 6-4.5 5.2 0.8C4.8-2 2.5-3.6 0.3-4.2Z" fill="#e6e6e6"/></g><g transform="translate(17 420)"><rect x="-8" y="-8.2" width="3" height="2.8" fill="#e6e6e6"/><rect x="5" y="-8.2" width="3" height="2.8" fill="#e6e6e6"/><rect x="-8" y="-3.8" width="3" height="2.8" fill="#e6e6e6"/><rect x="5" y="-3.8" width="3" height="2.8" fill="#e6e6e6"/><rect x="-8" y="0.6" width="3" height="2.8" fill="#e6e6e6"/><rect x="5" y="0.6" width="3" height="2.8" fill="#e6e6e6"/><rect x="-8" y="5.0" width="3" height="2.8" fill="#e6e6e6"/><rect x="5" y="5.0" width="3" height="2.8" fill="#e6e6e6"/><path d="M-3-4.6L4 0L-3 4.6Z" fill="#e6e6e6"/></g><g transform="translate(17 456.5)"><rect x="-7.5" y="-7.8" width="15" height="15.6" fill="none" stroke="#e6e6e6" stroke-width="1.3"/><path d="M-6 6L-2.5-0.5L0 2.8L2.6-3.2L6 3.5V6Z" fill="#e6e6e6"/><rect x="-5.6" y="-5.8" width="2.2" height="2.2" fill="#e6e6e6"/></g><g transform="translate(17 493.5)"><g transform="rotate(-43)"><path d="M-3.2 6.5V-5.2A3.2 3.2 0 0 1 3.2-5.2V7.2A2 2 0 0 1-0.8 7.2V-3.5" fill="none" stroke="#e6e6e6" stroke-width="1.5" stroke-linecap="round"/></g></g><g transform="translate(17 531)"><path d="M3-8.2A8.2 8.2 0 0 0 3 8.2Z" fill="#e6e6e6"/><rect x="-8.2" y="-1.6" width="5" height="3.2" fill="#e6e6e6"/><rect x="3" y="-5.6" width="5.4" height="3" fill="#e6e6e6"/><rect x="3" y="2.6" width="5.4" height="3" fill="#e6e6e6"/></g><g transform="translate(17 567)"><circle r="8" fill="#5c5c5c"/><text x="0" y="4" text-anchor="middle" font-family="Liberation Serif,serif" font-style="italic" font-weight="bold" font-size="13" fill="#333">v</text></g><g transform="translate(17 604)"><circle r="8" fill="#5c5c5c"/><text x="0" y="4.6" text-anchor="middle" font-family="Liberation Serif,serif" font-style="italic" font-weight="bold" font-size="14" fill="#333">b</text></g><g transform="translate(16.8 642)"><polygon points="0.00,-7.80 1.88,-2.59 7.42,-2.41 3.04,0.99 4.58,6.31 0.00,3.20 -4.58,6.31 -3.04,0.99 -7.42,-2.41 -1.88,-2.59" fill="#5c5c5c"/></g><g transform="translate(1341.6 266.4)"><circle r="4.9" fill="none" stroke="#e6e6e6" stroke-width="2"/><path d="M3.6 3.6L9.8 9.4" stroke="#e6e6e6" stroke-width="2.2" stroke-linecap="round"/></g><g transform="translate(1344 314.4)"><circle r="8" fill="#e6e6e6"/><text x="0" y="5" text-anchor="middle" font-family="Liberation Serif,serif" font-style="italic" font-weight="bold" font-size="15" fill="#333">i</text></g><g transform="translate(1344 360.5)"><rect x="-8" y="-6.5" width="7.4" height="13" fill="#e6e6e6"/><rect x="0.6" y="-6.5" width="7.4" height="13" fill="#e6e6e6"/></g><g transform="translate(1344 406.6)"><rect x="-8" y="-7.6" width="2.6" height="2" fill="#e6e6e6"/><rect x="-4" y="-7.6" width="12" height="2" fill="#e6e6e6"/><rect x="-8" y="-4.3" width="2.6" height="2" fill="#e6e6e6"/><rect x="-4" y="-4.3" width="12" height="2" fill="#e6e6e6"/><rect x="-8" y="-1.0" width="2.6" height="2" fill="#e6e6e6"/><rect x="-4" y="-1.0" width="12" height="2" fill="#e6e6e6"/><rect x="-8" y="2.3" width="2.6" height="2" fill="#e6e6e6"/><rect x="-4" y="2.3" width="12" height="2" fill="#e6e6e6"/><rect x="-8" y="5.6" width="2.6" height="2" fill="#e6e6e6"/><rect x="-4" y="5.6" width="12" height="2" fill="#e6e6e6"/></g><g transform="translate(1344 488)"><rect x="-8.3" y="-7" width="16.6" height="13.6" rx="1.5" fill="#e6e6e6"/><path d="M-5-7a5 3.4 0 0 1 10 0" fill="none" stroke="#e6e6e6" stroke-width="1.4"/><circle cx="2" cy="0" r="3.2" fill="#e6e6e6" stroke="#333" stroke-width="1.7"/><path d="M-7-3.6h2.6M-7-0.6h2.6M-7 2.4h2.6" stroke="#333" stroke-width="1.1"/></g><g transform="translate(1344 532)"><path d="M-5.5-11v22M0-11v22M5.5-11v22" stroke="#5c5c5c" stroke-width="1.2"/><rect x="-7" y="-2" width="3" height="6" rx="1.5" fill="#5c5c5c"/><rect x="-1.5" y="-6" width="3" height="7" rx="1.5" fill="#5c5c5c"/><rect x="4" y="-1" width="3" height="7" rx="1.5" fill="#5c5c5c"/></g><g transform="translate(80.5 39)"><rect x="-7.5" y="-7.5" width="15" height="15" fill="none" stroke="#5a5a5a" stroke-width="1"/><path d="M-7.5-5h15M-7.5 5h15" stroke="#5a5a5a" stroke-width="1.6"/></g><g transform="translate(110 39)"><rect x="-7.5" y="-7.5" width="15" height="15" rx="1.5" fill="none" stroke="#5a5a5a" stroke-width="1"/><path d="M-2.4 2.5l1.4-5M0 2.5l1.4-5M2.4 2.5l1.4-5" stroke="#5a5a5a" stroke-width="1"/><path d="M-7.5 6.5h15" stroke="#5a5a5a" stroke-width="1"/></g><g transform="translate(138.8 40)"><path d="M-8-6h16v9h-2.5v3.6l-4-3.6H-8z" fill="#5a5a5a"/></g><g transform="translate(167.7 39)"><rect x="-7.5" y="-7.5" width="15" height="15" fill="none" stroke="#5a5a5a" stroke-width="1"/><path d="M-5-5L5 5M5-5L-5 5" stroke="#5a5a5a" stroke-width="1.3"/></g><g transform="translate(196.8 39)"><rect x="-7.5" y="-7.5" width="15" height="15" fill="none" stroke="#5a5a5a" stroke-width="1"/><circle r="3.6" fill="none" stroke="#5a5a5a" stroke-width="1.3"/><path d="M-3 11.5h6l-3 3z" fill="#5a5a5a"/></g><g transform="translate(225.2 39)"><rect x="-7.5" y="-7.5" width="15" height="15" fill="none" stroke="#5a5a5a" stroke-width="1"/><path d="M-4.5-3.5L1.5 0L-4.5 3.5z" fill="#5a5a5a"/><path d="M-3 11.5h6l-3 3z" fill="#5a5a5a"/></g><g transform="translate(254.6 39)"><rect x="-7.5" y="-7.5" width="15" height="15" fill="none" stroke="#5a5a5a" stroke-width="1"/><path d="M-5-0.5h10" stroke="#5a5a5a" stroke-width="1.6"/><path d="M-3 11.5h6l-3 3z" fill="#5a5a5a"/></g><g transform="translate(283.7 39.5)"><path d="M-4.6 6.2A7.6 7.6 0 1 1 4.6 6.2" fill="none" stroke="#5a5a5a" stroke-width="1.4"/><path d="M0 0.5L3-5.5" stroke="#5a5a5a" stroke-width="1.5"/><path d="M-3 11h6l-3 3z" fill="#5a5a5a"/></g><g transform="translate(312.5 39)"><path d="M0-5.5V5.5M-5.5 0H5.5" stroke="#5a5a5a" stroke-width="2.2"/><path d="M-3 11.5h6l-3 3z" fill="#5a5a5a"/></g><g transform="translate(357 39.5)"><path d="M-1-7.5L7 0.5L0.5 7L-7.5-1Z" fill="#5a5a5a"/><path d="M-1.5-7.5L2-4" stroke="#5a5a5a" stroke-width="1"/><path d="M8.3 1.5c1.6 2.4 1.6 4.2 0 4.2s-1.6-1.8 0-4.2z" fill="#5a5a5a"/><path d="M-5.5-1.2L-0.8-5.8L4.8-0.2Z" fill="#333" opacity=".55"/></g><path d="M673.5 56l6.5-6.5l6.5 6.5z" fill="#585858"/><path d="M40.3 36.2h6.4l-3.2 5.6z" fill="#f2f2f2"/><rect x="1304" y="34" width="2" height="3" fill="#e4f0c8"/><rect x="1307" y="34" width="2" height="3" fill="#e6d8f0"/><rect x="1310" y="34" width="2" height="3" fill="#f2d21c"/><rect x="1313" y="34" width="2" height="3" fill="#f0f0f0"/><rect x="1316" y="34" width="2" height="3" fill="#f0f0f0"/><rect x="1319" y="34" width="2" height="3" fill="#f0f0f0"/><rect x="1322" y="34" width="2" height="3" fill="#f0f0f0"/><rect x="1304" y="38" width="2" height="3" fill="#f0f0f0"/><rect x="1307" y="38" width="2" height="3" fill="#f0f0f0"/><rect x="1310" y="38" width="2" height="3" fill="#f0f0f0"/><rect x="1313" y="38" width="2" height="3" fill="#f0f0f0"/><rect x="1316" y="38" width="2" height="3" fill="#f0f0f0"/><rect x="1319" y="38" width="2" height="3" fill="#f0f0f0"/><rect x="1322" y="38" width="2" height="3" fill="#f0f0f0"/><rect x="1304" y="42" width="2" height="3" fill="#f0f0f0"/><rect x="1307" y="42" width="2" height="3" fill="#f0f0f0"/><rect x="1310" y="42" width="2" height="3" fill="#f0f0f0"/><rect x="1313" y="42" width="2" height="3" fill="#f0f0f0"/><rect x="1316" y="42" width="2" height="3" fill="#f0f0f0"/><rect x="1319" y="42" width="2" height="3" fill="#f0f0f0"/><rect x="1322" y="42" width="2" height="3" fill="#f0f0f0"/><rect x="1304" y="46" width="2" height="3" fill="#f0f0f0"/><rect x="1307" y="46" width="2" height="3" fill="#f0f0f0"/><rect x="1310" y="46" width="2" height="3" fill="#f0f0f0"/><rect x="1313" y="46" width="2" height="3" fill="#f0f0f0"/><rect x="1316" y="46" width="2" height="3" fill="#f0f0f0"/><rect x="1319" y="46" width="2" height="3" fill="#f0f0f0"/><rect x="1322" y="46" width="2" height="3" fill="#f0f0f0"/><rect x="1304" y="50" width="2" height="3" fill="#f0f0f0"/><rect x="1307" y="50" width="2" height="3" fill="#f0f0f0"/><rect x="1322" y="30" width="2" height="3" fill="#f0f0f0"/><g transform="translate(17 890)"><rect x="-6.4" y="-1.4" width="12.8" height="9" rx="1" fill="#e6e6e6"/><path d="M-4-1.4V-3.6A4 4 0 0 1 4-3.6V-1.4" fill="none" stroke="#e6e6e6" stroke-width="2"/><circle cx="0" cy="2.2" r="1.4" fill="#333"/><rect x="-0.7" y="2.4" width="1.4" height="3.2" fill="#333"/></g><g transform="translate(48 890)"><path d="M6.5-1V-6.8H-6.8V6.8H0" fill="none" stroke="#5c5c5c" stroke-width="1.6"/><path d="M1 0.2L7.5 4.2L4.6 4.8L6.4 8L5 8.7L3.3 5.5L1.2 7.4Z" fill="#5c5c5c"/></g><g transform="translate(94.5 890)"><rect x="-8.5" y="-8" width="17" height="10" fill="#e6e6e6"/><path d="M0 2L-5.6 7.4M0 2L5.6 7.4" stroke="#e6e6e6" stroke-width="1.6"/></g><g transform="translate(140.5 890)"><rect x="-8" y="-7" width="11" height="9.4" fill="#e6e6e6"/><rect x="-3.6" y="-2.6" width="12.4" height="9.6" fill="#e6e6e6" stroke="#333" stroke-width="1.2"/></g><g transform="translate(186.5 889.5)"><rect x="-8" y="-4.6" width="16" height="9.4" fill="#5c5c5c" opacity=".8"/><path d="M-4.5-8.5L3 8.5" stroke="#333" stroke-width="2.4"/><path d="M-4.5-8.5L3 8.5" stroke="#5c5c5c" stroke-width="1"/></g><g transform="translate(216 890)"><path d="M-4-8V8M0-8V8M4-8V8M-8-4H8M-8 0H8M-8 4H8" stroke="#5c5c5c" stroke-width="1"/></g><g transform="translate(260 891)"><g transform="rotate(-40)"><path d="M-2.8 5.5V-4.4A2.8 2.8 0 0 1 2.8-4.4V6.2A1.7 1.7 0 0 1-0.6 6.2V-3" fill="none" stroke="#5c5c5c" stroke-width="1.4" stroke-linecap="round"/></g><path d="M6-9.5v6M3-6.5h6" stroke="#5c5c5c" stroke-width="1.3"/></g><g transform="translate(308 890)"><path d="M-7 7L2.5-2.5" stroke="#e6e6e6" stroke-width="3.4" stroke-linecap="round"/><path d="M8.4-5.6A4.6 4.6 0 1 1 3.6-8.6L3-5.2L5.6-3.4Z" fill="#e6e6e6"/><circle cx="-6.6" cy="6.6" r="0.9" fill="#333"/></g><g transform="translate(353.5 890)"><rect x="-8.5" y="-8" width="17" height="15.6" fill="#e6e6e6"/><rect x="-4.2" y="-8" width="2.8" height="9.4" fill="#333"/><rect x="1.4" y="-8" width="2.8" height="9.4" fill="#333"/><path d="M-2.8 1.4V7.6M2.8 1.4V7.6" stroke="#333" stroke-width=".8"/></g><g transform="translate(399.5 890)"><rect x="-8.0" y="-7.8" width="3" height="2.8" fill="#e6e6e6"/><rect x="-8.0" y="0.8" width="3" height="2.8" fill="#e6e6e6"/><rect x="-3.6" y="-7.8" width="3" height="2.8" fill="#e6e6e6"/><rect x="-3.6" y="0.8" width="3" height="2.8" fill="#e6e6e6"/><rect x="0.8" y="-7.8" width="3" height="2.8" fill="#e6e6e6"/><rect x="0.8" y="0.8" width="3" height="2.8" fill="#e6e6e6"/><rect x="5.2" y="-7.8" width="3" height="2.8" fill="#e6e6e6"/><rect x="5.2" y="0.8" width="3" height="2.8" fill="#e6e6e6"/><rect x="-5.8" y="-3.5" width="3" height="2.8" fill="#e6e6e6"/><rect x="-1.4" y="-3.5" width="3" height="2.8" fill="#e6e6e6"/><rect x="3.0" y="-3.5" width="3" height="2.8" fill="#e6e6e6"/><rect x="-6.4" y="5" width="12.8" height="2.6" fill="#e6e6e6"/></g><g transform="translate(1292.5 890)"><circle r="9.6" fill="none" stroke="#4d4d4d" stroke-width="3.2"/><path d="M0-11.5V-7.5M0 11.5V7.5M-11.5 0H-7.5M11.5 0H7.5" stroke="#333" stroke-width="1.4"/><path d="M-2.6-4.2L4.4 0L-2.6 4.2Z" fill="#dcdcdc"/></g><g transform="translate(1344 890.8)"><path d="M-3.9-3.6A5.9 5.9 0 1 0 3.9-3.6" fill="none" stroke="#3f95d8" stroke-width="2.5" stroke-linecap="round"/><path d="M0-6.8V0.2" stroke="#3f95d8" stroke-width="2.5" stroke-linecap="round"/></g><rect x="1335" y="761.5" width="7" height="24" fill="#5a5a5a"/><rect x="1346" y="761.5" width="7" height="24" fill="#5a5a5a"/><rect x="1335" y="793.4" width="7" height="2.8" fill="#5a5a5a"/><rect x="1346" y="793.4" width="7" height="2.8" fill="#5a5a5a"/><rect x="1335" y="797.5" width="7" height="2.8" fill="#5a5a5a"/><rect x="1346" y="797.5" width="7" height="2.8" fill="#5a5a5a"/><rect x="1335" y="801.6" width="7" height="2.8" fill="#5a5a5a"/><rect x="1346" y="801.6" width="7" height="2.8" fill="#5a5a5a"/><rect x="1335" y="805.7" width="7" height="2.8" fill="#5a5a5a"/><rect x="1346" y="805.7" width="7" height="2.8" fill="#5a5a5a"/><rect x="1335" y="809.8" width="7" height="2.8" fill="#5a5a5a"/><rect x="1346" y="809.8" width="7" height="2.8" fill="#5a5a5a"/><rect x="1335" y="813.9" width="7" height="2.8" fill="#5a5a5a"/><rect x="1346" y="813.9" width="7" height="2.8" fill="#5a5a5a"/><rect x="1335" y="817.9" width="7" height="2.8" fill="#5a5a5a"/><rect x="1346" y="817.9" width="7" height="2.8" fill="#5a5a5a"/><rect x="1335" y="822.0" width="7" height="2.8" fill="#5a5a5a"/><rect x="1346" y="822.0" width="7" height="2.8" fill="#5a5a5a"/><rect x="1335" y="826.1" width="7" height="2.8" fill="#5a5a5a"/><rect x="1346" y="826.1" width="7" height="2.8" fill="#5a5a5a"/><rect x="1335" y="830.2" width="7" height="2.8" fill="#5a5a5a"/><rect x="1346" y="830.2" width="7" height="2.8" fill="#5a5a5a"/><rect x="1335" y="834.3" width="7" height="2.8" fill="#5a5a5a"/><rect x="1346" y="834.3" width="7" height="2.8" fill="#5a5a5a"/><rect x="1335" y="838.4" width="7" height="2.8" fill="#5a5a5a"/><rect x="1346" y="838.4" width="7" height="2.8" fill="#5a5a5a"/><rect x="1335" y="842.5" width="7" height="2.8" fill="#5a5a5a"/><rect x="1346" y="842.5" width="7" height="2.8" fill="#5a5a5a"/><rect x="1335" y="846.6" width="7" height="2.8" fill="#5a5a5a"/><rect x="1346" y="846.6" width="7" height="2.8" fill="#5a5a5a"/><rect x="1335" y="850.7" width="7" height="2.8" fill="#5a5a5a"/><rect x="1346" y="850.7" width="7" height="2.8" fill="#5a5a5a"/><rect x="1335" y="854.8" width="7" height="2.8" fill="#5a5a5a"/><rect x="1346" y="854.8" width="7" height="2.8" fill="#5a5a5a"/><rect x="1335" y="858.8" width="7" height="2.8" fill="#5a5a5a"/><rect x="1346" y="858.8" width="7" height="2.8" fill="#5a5a5a"/><rect x="1335" y="862.9" width="7" height="2.8" fill="#5a5a5a"/><rect x="1346" y="862.9" width="7" height="2.8" fill="#5a5a5a"/><rect x="1335" y="867.0" width="7" height="2.8" fill="#5a5a5a"/><rect x="1346" y="867.0" width="7" height="2.8" fill="#5a5a5a"/><circle cx="1344" cy="789.4" r="5" fill="#e4e4e4"/></svg>
</div></body></html>
